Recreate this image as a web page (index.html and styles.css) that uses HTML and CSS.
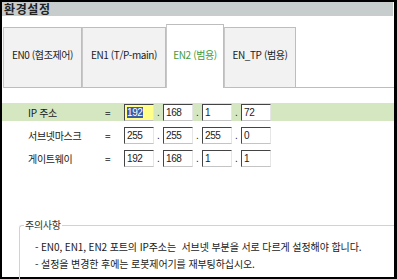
FILE: index.html
```html
<!DOCTYPE html>
<html lang="ko">
<head>
<meta charset="utf-8">
<link rel="stylesheet" href="styles.css">
</head>
<body>
<div class="win">
  <div class="title">환경설정</div>
  <div class="tabs">
    <div class="tab t1">EN0 (협조제어)</div>
    <div class="tab t2">EN1 (T/P-main)</div>
    <div class="tab t3 active">EN2 (범용)</div>
    <div class="tab t4">EN_TP (범용)</div>
    <div class="tabfill"></div>
  </div>
  <div class="panel">
    <div class="row sel">
      <span class="label">IP 주소</span>
      <span class="eq">=</span>
      <span class="ip">
        <span class="box focus"><span class="hl">192</span></span><span class="dot">.</span>
        <span class="box">168</span><span class="dot">.</span>
        <span class="box">1</span><span class="dot">.</span>
        <span class="box">72</span>
      </span>
    </div>
    <div class="row">
      <span class="label">서브넷마스크</span>
      <span class="eq">=</span>
      <span class="ip">
        <span class="box">255</span><span class="dot">.</span>
        <span class="box">255</span><span class="dot">.</span>
        <span class="box">255</span><span class="dot">.</span>
        <span class="box">0</span>
      </span>
    </div>
    <div class="row">
      <span class="label">게이트웨이</span>
      <span class="eq">=</span>
      <span class="ip">
        <span class="box">192</span><span class="dot">.</span>
        <span class="box">168</span><span class="dot">.</span>
        <span class="box">1</span><span class="dot">.</span>
        <span class="box">1</span>
      </span>
    </div>
  </div>
  <div class="note">
    <div class="legend">주의사항</div>
    <p>- EN0, EN1, EN2 포트의 IP주소는&nbsp; 서브넷 부분을 서로 다르게 설정해야 합니다.</p>
    <p>- 설정을 변경한 후에는 로봇제어기를 재부팅하십시오.</p>
  </div>
</div>
</body>
</html>
```

FILE: styles.css
```css
html, body {
  margin: 0;
  padding: 0;
  background: #000;
  width: 397px;
  height: 279px;
  overflow: hidden;
}
body {
  font-family: "Noto Sans CJK KR", "Liberation Sans", sans-serif;
  font-size: 10px;
  color: #1a1a1a;
}
.win {
  margin: 2px 0 0 2px;
  width: 392px;
  height: 275px;
  background: #fff;
}
.title {
  height: 14px;
  background: #c7cccc;
  font-weight: bold;
  font-size: 12px;
  line-height: 14px;
  padding-left: 2px;
  color: #222;
  letter-spacing: 0.6px;
  margin-right: 1px;
}
.tabs {
  display: flex;
  align-items: flex-end;
  height: 64px;
  margin-top: 8px;
  padding-left: 1px;
}
.tab {
  box-sizing: border-box;
  height: 61px;
  border: 1px solid #bdbdbd;
  border-left-color: #c8c8c8;
  background: #f2f2f2;
  display: flex;
  align-items: center;
  justify-content: center;
  padding-bottom: 6px;
  letter-spacing: -0.4px;
  white-space: nowrap;
  color: #1a1a1a;
}
.t1 { width: 79px; }
.t2 { width: 84px; }
.t3 { width: 58px; }
.t4 { width: 72px; }
.tab.active {
  height: 64px;
  background: #fff;
  border-bottom: none;
  color: #3c9b3c;
  padding-bottom: 5px;
}
.tabfill {
  flex: 1;
  height: 1px;
  background: #bdbdbd;
}
.panel {
  margin-top: 15px;
  display: flex;
  flex-direction: column;
  gap: 5px;
}
.row {
  height: 18px;
  display: flex;
  align-items: center;
}
.row.sel { background: #d4e7c1; }
.label {
  width: 77px;
  padding-left: 26px;
  letter-spacing: -0.3px;
}
.eq {
  width: 19px;
}
.ip {
  display: flex;
  align-items: center;
}
.box {
  box-sizing: border-box;
  width: 30px;
  height: 17px;
  border-top: 1px solid #444;
  border-left: 1px solid #444;
  border-bottom: 1px solid #c4c4c4;
  border-right: 1px solid #e6e6e6;
  background: #fff;
  font-family: "Liberation Sans", sans-serif;
  font-size: 10px;
  line-height: 15px;
  padding-left: 2px;
  letter-spacing: -0.4px;
  color: #222;
}
.box.focus { background: #ffff8a; }
.hl {
  background: #3a5da8;
  color: #fff;
}
.dot {
  width: 9px;
  text-align: center;
  font-family: "Liberation Sans", sans-serif;
}
.note {
  position: relative;
  box-sizing: border-box;
  margin: 58px 0 0 17px;
  border: 1px solid #d2d2d2;
  border-radius: 3px 0 0 0;
  border-right: none;
  border-bottom: none;
  height: 57px;
  padding-top: 12px;
  padding-left: 15px;
}
.legend {
  position: absolute;
  top: -8px;
  left: 4px;
  background: #fff;
  padding: 0 1px;
  line-height: 14px;
  letter-spacing: -0.3px;
  color: #333;
}
.note p {
  margin: 0;
  height: 17px;
  line-height: 17px;
  letter-spacing: -0.1px;
  white-space: nowrap;
}
```
